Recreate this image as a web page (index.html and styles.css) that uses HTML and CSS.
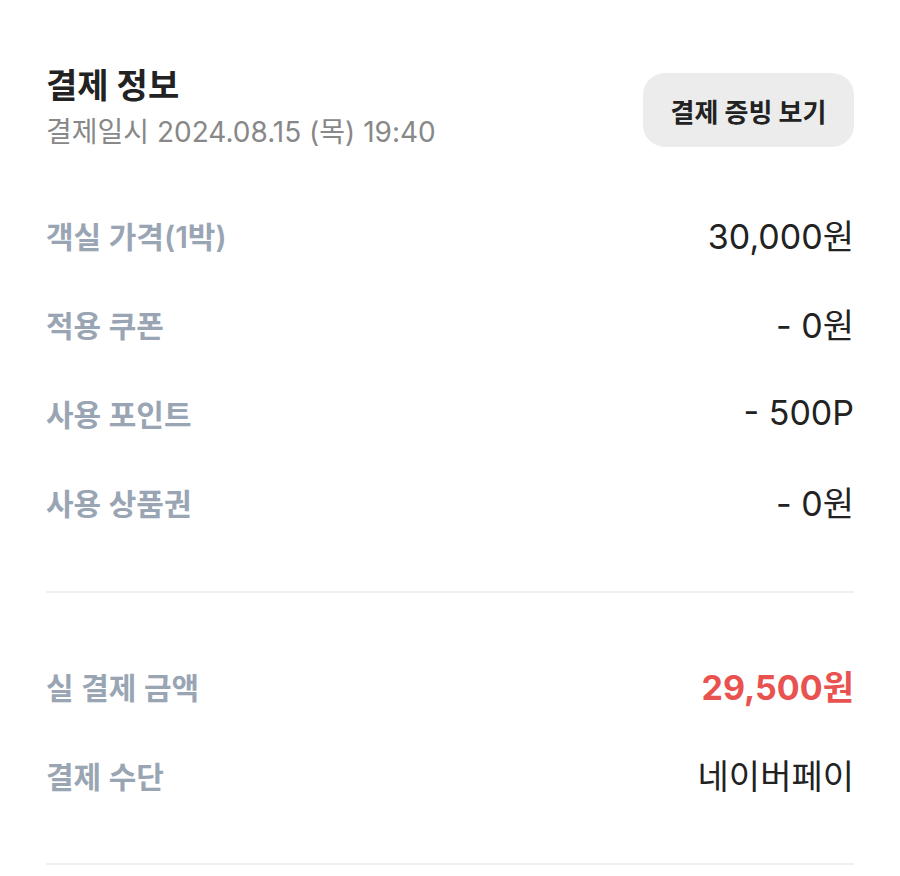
FILE: index.html
```html
<!DOCTYPE html>
<html lang="ko">
<head>
    <meta charset="UTF-8">
    <meta name="viewport" content="width=device-width, initial-scale=1.0">
    <title>결제 정보</title>
    <link rel="stylesheet" href="styles.css">
</head>
<body>

    <div class="container">
        <div class="header">
            <div>
                <h1 class="title">결제 정보</h1>
                <p class="date">결제일시 2024.08.15 (목) 19:40</p>
            </div>
            <button class="receipt-btn">결제 증빙 보기</button>
        </div>

        <ul class="price-list">
            <li class="row">
                <span class="label">객실 가격(1박)</span>
                <span class="value">30,000원</span>
            </li>
            <li class="row">
                <span class="label">적용 쿠폰</span>
                <span class="value">- 0원</span>
            </li>
            <li class="row">
                <span class="label">사용 포인트</span>
                <span class="value">- 500P</span>
            </li>
            <li class="row">
                <span class="label">사용 상품권</span>
                <span class="value">- 0원</span>
            </li>
        </ul>

        <hr class="divider">

        <ul class="price-list summary">
            <li class="row">
                <span class="label">실 결제 금액</span>
                <span class="value total">29,500원</span>
            </li>
            <li class="row">
                <span class="label">결제 수단</span>
                <span class="value">네이버페이</span>
            </li>
        </ul>

        <hr class="divider bottom">
    </div>

</body>
</html>
```

FILE: styles.css
```css
body {
    font-family: Inter, "Noto Sans CJK KR", sans-serif;
    margin: 0;
    background: #fff;
    color: #222;
}
.container {
    padding: 0 46px;
}
.header {
    display: flex;
    justify-content: space-between;
    align-items: flex-start;
    padding-top: 64px;
}
.title {
    margin: 0;
    font-size: 34px;
    line-height: 44px;
    font-weight: 700;
    color: #222;
}
.date {
    margin: 6px 0 0;
    font-size: 28px;
    line-height: 36px;
    color: #888;
}
.receipt-btn {
    margin-top: 9px;
    width: 211px;
    height: 74px;
    border: none;
    border-radius: 22px;
    background-color: #ececec;
    color: #222;
    font-family: inherit;
    font-size: 26px;
    font-weight: 700;
    cursor: pointer;
}
.price-list {
    list-style: none;
    margin: 40px 0 0;
    padding: 0;
}
.price-list.summary {
    margin-top: 48px;
}
.row {
    display: flex;
    justify-content: space-between;
    align-items: center;
    height: 89px;
}
.label {
    font-size: 30px;
    font-weight: 600;
    color: #9aa5b4;
}
.value {
    font-size: 34px;
    color: #222;
}
.total {
    font-weight: 700;
    color: #e8524f;
}
.divider {
    margin: 45px 0 0;
    border: none;
    height: 2px;
    background: #f0f0f0;
}
.divider.bottom {
    margin-top: 44px;
}
```
